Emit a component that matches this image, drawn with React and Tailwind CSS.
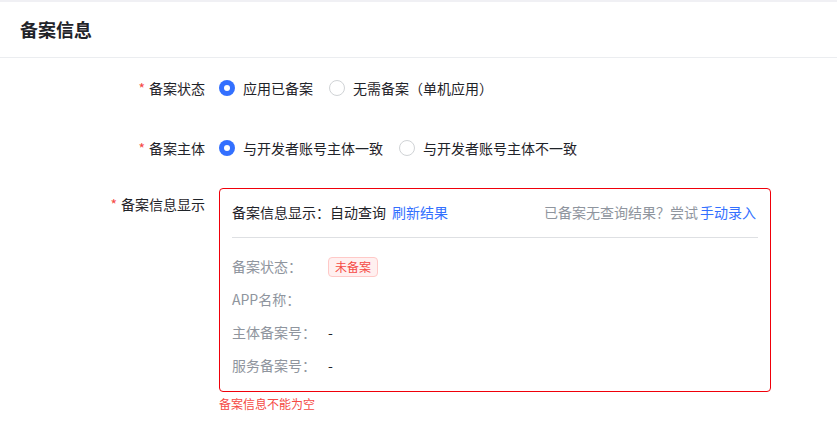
const font = { fontFamily: '"Noto Sans CJK SC", "Noto Sans", sans-serif' };

function Radio({ checked, label }) {
    return (
        <label className="flex items-center gap-2 mr-4 cursor-pointer">
            {checked ? (
                <span className="w-4 h-4 rounded-full bg-[#3370ff] flex items-center justify-center">
                    <span className="w-[6px] h-[6px] rounded-full bg-white"></span>
                </span>
            ) : (
                <span className="w-4 h-4 rounded-full border border-[#d0d3d6] bg-white"></span>
            )}
            <span className="text-[14px] text-[#1f2329]">{label}</span>
        </label>
    );
}

function Label({ children }) {
    return (
        <div className="w-[205px] flex justify-end items-center h-8 shrink-0">
            <span className="text-[#f54a45] mr-[4px] text-[14px]">*</span>
            <span className="text-[14px] text-[#1f2329]">{children}</span>
        </div>
    );
}

function InfoRow({ label, children }) {
    return (
        <div className="flex items-center h-[22px] text-[14px]">
            <span className="w-[96px] text-[#8f959e]">{label}</span>
            <span className="text-[#1f2329]">{children}</span>
        </div>
    );
}

export default function App() {
    return (
        <div className="w-[837px] h-[426px] bg-white overflow-hidden" style={font}>
            <div className="h-[2px] bg-[#f0f0f4]"></div>
            <div className="h-[56px] border-b border-[#ebedf0] flex items-center px-5">
                <span className="text-[18px] font-semibold text-[#1f2329]">备案信息</span>
            </div>
            <div className="pt-[14px]">
                <div className="flex items-center h-8">
                    <Label>备案状态</Label>
                    <div className="flex items-center ml-[14px]">
                        <Radio checked label="应用已备案" />
                        <Radio label="无需备案（单机应用）" />
                    </div>
                </div>
                <div className="flex items-center h-8 mt-7">
                    <Label>备案主体</Label>
                    <div className="flex items-center ml-[14px]">
                        <Radio checked label="与开发者账号主体一致" />
                        <Radio label="与开发者账号主体不一致" />
                    </div>
                </div>
                <div className="flex items-start mt-6">
                    <Label>备案信息显示</Label>
                    <div className="ml-[14px]">
                        <div className="w-[552px] h-[204px] border border-[#f0000a] rounded-[4px] px-3 pt-3 pb-[14px]">
                            <div className="flex items-center justify-between h-[22px] text-[14px]">
                                <div className="text-[#1f2329]">
                                    备案信息显示：自动查询
                                    <span className="text-[#3370ff] ml-[6px]">刷新结果</span>
                                </div>
                                <div className="text-[#8f959e] pr-[2px]">
                                    已备案无查询结果？尝试
                                    <span className="text-[#3370ff] ml-[2px]">手动录入</span>
                                </div>
                            </div>
                            <div className="mt-[14px] h-px bg-[#dee0e3]"></div>
                            <div className="mt-[17px] flex flex-col gap-[11px]">
                                <InfoRow label="备案状态：">
                                    <span className="inline-flex items-center h-5 px-[6px] rounded-[4px] border border-[#ffc9c7] bg-[#fff0f0] text-[#f54a45] text-[12px]">
                                        未备案
                                    </span>
                                </InfoRow>
                                <InfoRow label="APP名称：" />
                                <InfoRow label="主体备案号：">-</InfoRow>
                                <InfoRow label="服务备案号：">-</InfoRow>
                            </div>
                        </div>
                        <div className="text-[12px] text-[#f54a45] leading-5 mt-[2px]">备案信息不能为空</div>
                    </div>
                </div>
            </div>
        </div>
    );
}
